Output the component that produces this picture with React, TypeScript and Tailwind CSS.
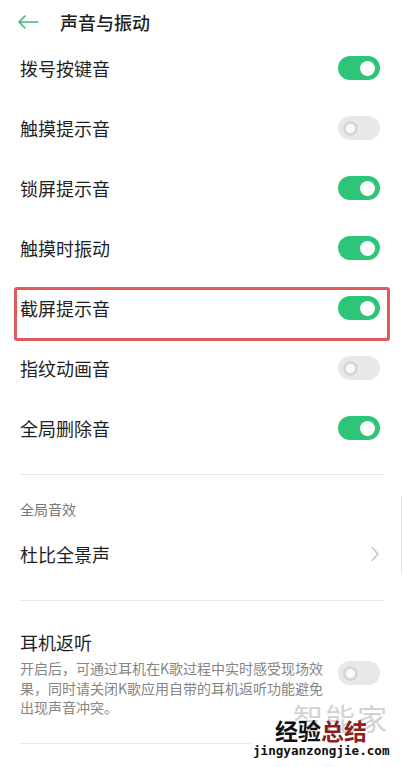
import React from 'react';

const font = { fontFamily: '"Noto Sans CJK SC", "Noto Sans", sans-serif' };

function Toggle({ on }: { on: boolean }) {
  return on ? (
    <div className="w-[42px] h-[24px] rounded-full bg-[#2ec57a] flex items-center justify-end pr-[5px]">
      <div className="w-[15px] h-[15px] rounded-full bg-white" />
    </div>
  ) : (
    <div className="w-[42px] h-[24px] rounded-full bg-[#e8e8e8] flex items-center pl-[5px]">
      <div className="w-[15px] h-[15px] rounded-full bg-[#fafafa] border-[3px] border-[#d6d6d6]" />
    </div>
  );
}

const rows = [
  { label: '拨号按键音', on: true },
  { label: '触摸提示音', on: false },
  { label: '锁屏提示音', on: true },
  { label: '触摸时振动', on: true },
  { label: '截屏提示音', on: true, marked: true },
  { label: '指纹动画音', on: false },
  { label: '全局删除音', on: true },
];

export default function App() {
  return (
    <div className="relative w-[404px] h-[767px] bg-white overflow-hidden text-[#1f1f1f]" style={font}>
      <header className="h-[38px] pt-[6px] flex items-center">
        <svg className="ml-[17px] w-[22px] h-[14px]" viewBox="0 0 22 14" fill="none" stroke="#3dbb7c" strokeWidth="1.6" strokeLinecap="round" strokeLinejoin="round">
          <path d="M21 7H2M8 1L2 7l6 6" />
        </svg>
        <h1 className="ml-[21px] text-[18px] leading-[22px] font-medium">声音与振动</h1>
      </header>

      {rows.map((r) => (
        <div key={r.label} className="relative h-[60px] px-[20px] flex items-center justify-between">
          <span className="text-[18px] leading-[22px]">{r.label}</span>
          <div className="mr-[4px]">
            <Toggle on={r.on} />
          </div>
          {r.marked && (
            <div className="absolute left-[14px] right-[14px] top-[9px] h-[54px] border-[3px] border-[#df5a5a] rounded-[3px]" />
          )}
        </div>
      ))}

      <div className="mx-[20px] mt-[16px] h-px bg-[#e8e8e8]" />

      <div className="h-[54px] px-[20px] pt-[24px]">
        <span className="block text-[14px] leading-[20px] text-[#777]">全局音效</span>
      </div>
      <div className="h-[50px] px-[20px] flex items-center justify-between">
        <span className="text-[18px] leading-[22px]">杜比全景声</span>
        <svg className="mr-[4px] w-[10px] h-[16px]" viewBox="0 0 10 16" fill="none" stroke="#c4c4c4" strokeWidth="1.4" strokeLinecap="round" strokeLinejoin="round">
          <path d="M2 1.5l6 6.5-6 6.5" />
        </svg>
      </div>

      <div className="mx-[20px] mt-[21px] h-px bg-[#e8e8e8]" />

      <div className="px-[20px] pt-[30px] pb-[25px] flex items-center justify-between">
        <div className="w-[304px]">
          <div className="text-[18px] leading-[22px]">耳机返听</div>
          <p className="mt-[6px] text-[14px] leading-[19.5px] text-[#858585]">
            开启后，可通过耳机在K歌过程中实时感受现场效果，同时请关闭K歌应用自带的耳机返听功能避免出现声音冲突。
          </p>
        </div>
        <div className="mr-[4px] -mt-[2px]">
          <Toggle on={false} />
        </div>
      </div>

      <div className="mx-[20px] h-px bg-[#e8e8e8]" />

      <div className="absolute right-[2px] top-[497px] w-px h-[76px] bg-[#e4e4e4]" />

      <div className="absolute left-[250px] top-[702px] w-[154px] h-[60px] bg-white/90">
        <div className="absolute left-[43px] top-[0px] text-[30px] leading-[30px] tracking-[2px] text-[#cfd3d6]">智能家</div>
        <div className="absolute left-[25px] top-[15px] text-[23px] leading-[26px] font-bold">
          <span className="text-[#111]">经验</span>
          <span className="text-[#8e1f1f]">总结</span>
        </div>
        <div
          className="absolute left-[3px] top-[41px] text-[12.6px] leading-[15px] font-bold text-[#111]"
          style={{ fontFamily: '"DejaVu Sans Mono", "Liberation Mono", monospace' }}
        >
          jingyanzongjie.com
        </div>
      </div>
    </div>
  );
}
